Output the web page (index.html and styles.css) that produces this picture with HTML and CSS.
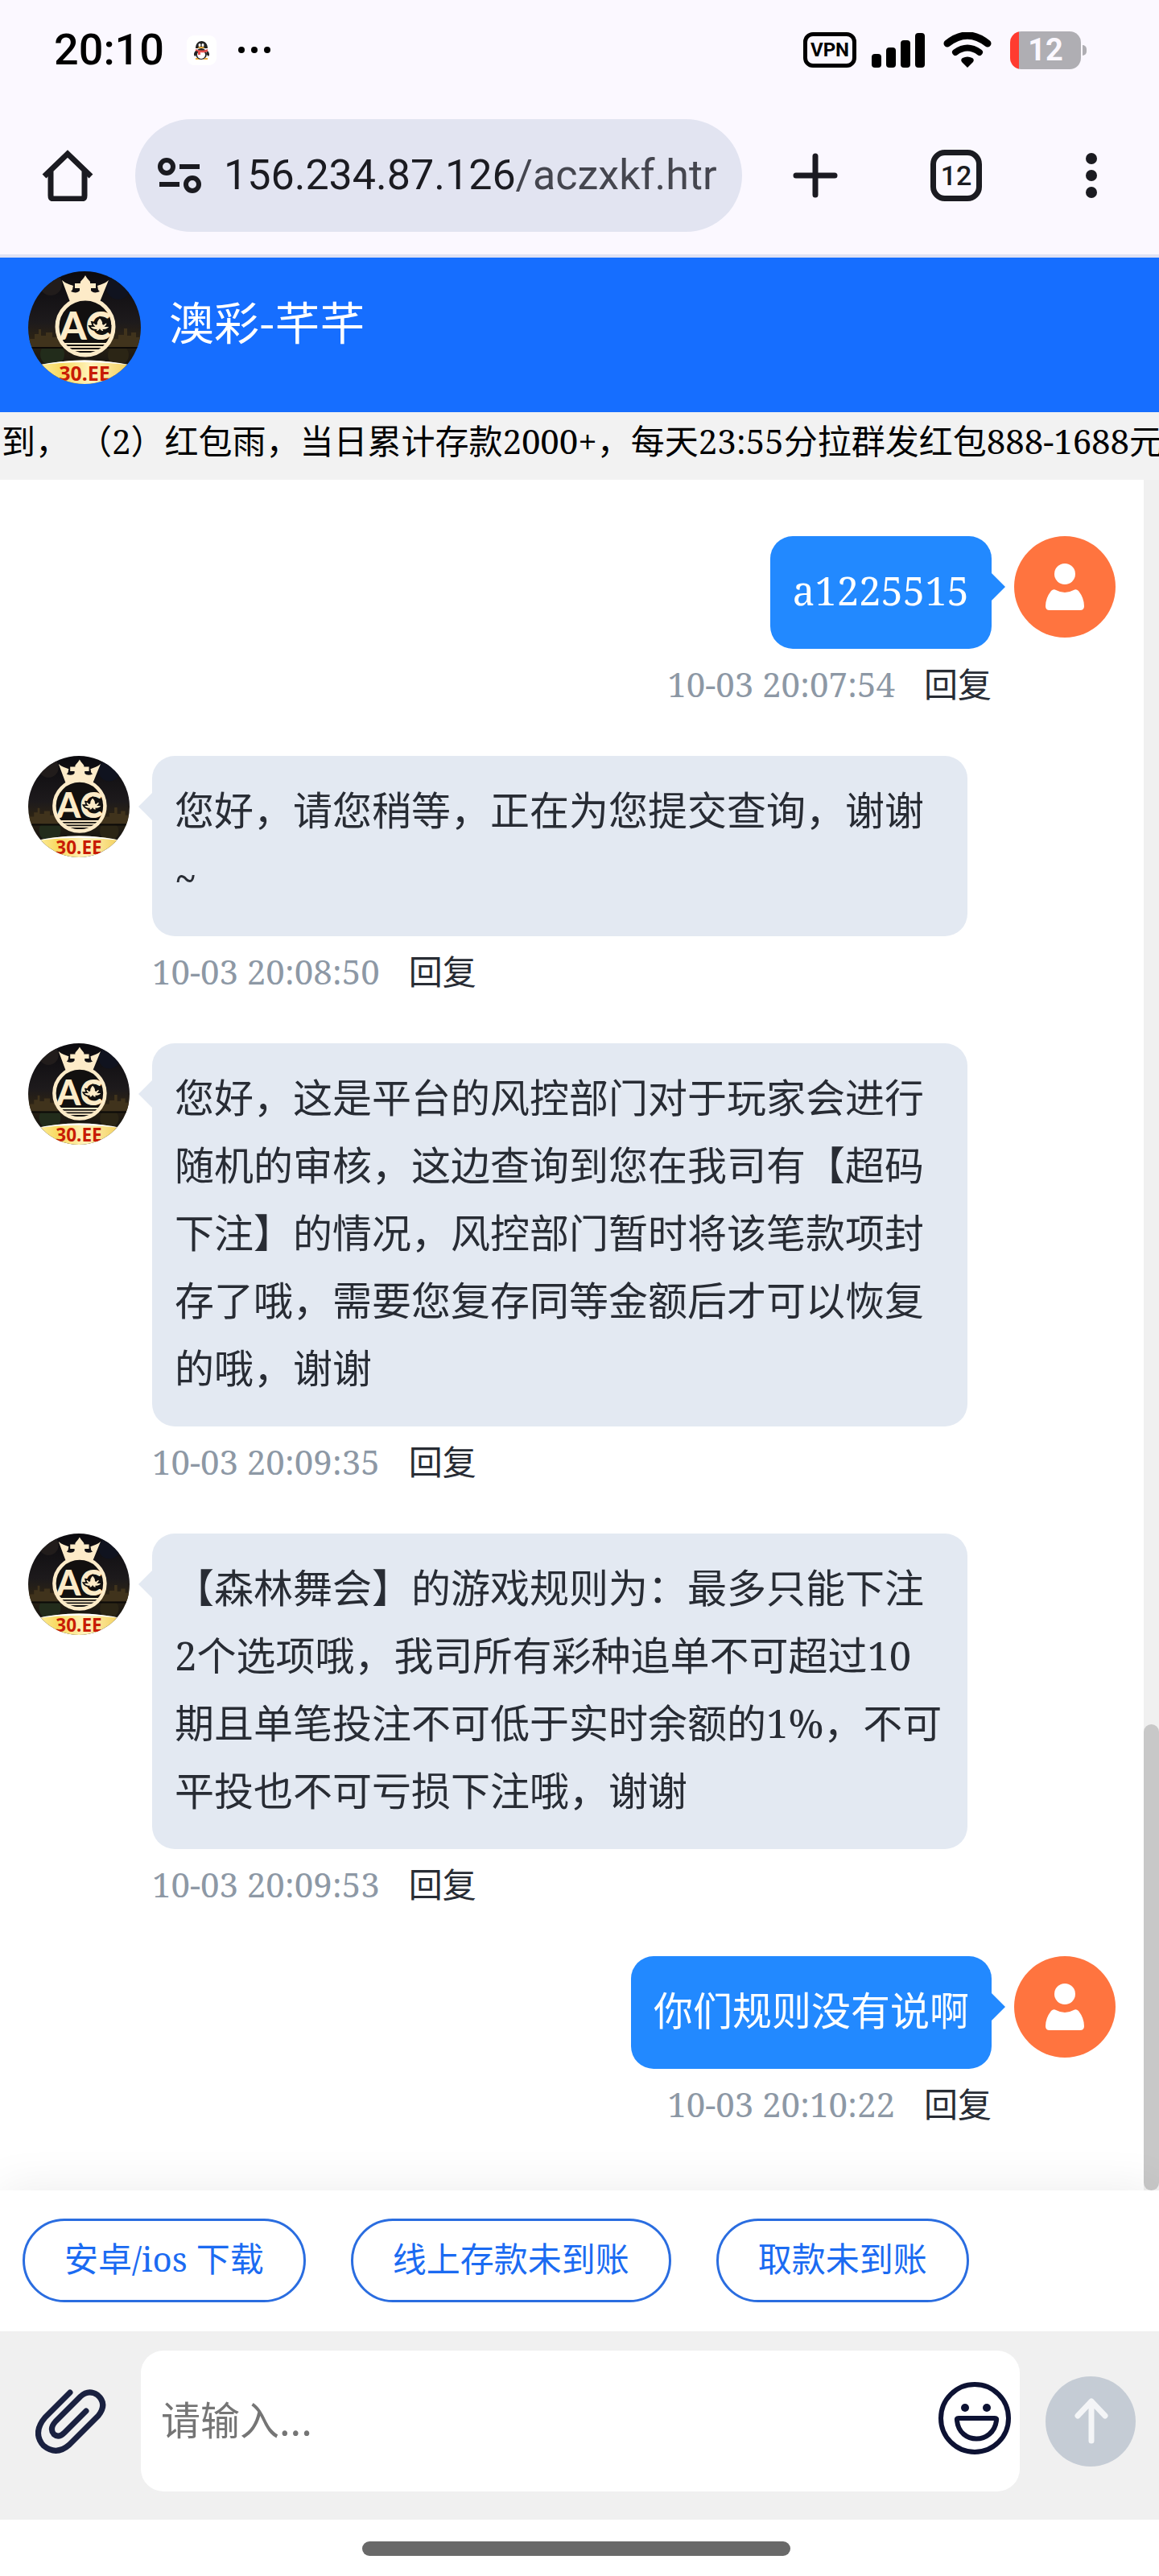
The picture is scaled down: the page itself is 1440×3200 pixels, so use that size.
FILE: index.html
```html
<!DOCTYPE html>
<html lang="zh-CN">
<head>
    <meta charset="UTF-8">
    <meta name="viewport" content="width=device-width, initial-scale=1">
    <title>澳彩-芊芊</title>
    <link rel="stylesheet" href="styles.css">
</head>
<body>
    <!-- Phone status bar -->
    <div class="status-bar">
        <span class="clock">20:10</span>
        <svg class="qq" width="37" height="37" viewBox="0 0 37 37">
            <rect width="37" height="37" rx="9" fill="#fff"/>
            <path d="M14 28h-3v2h6zM23 28h3v2h-6z" fill="#f2b13c"/>
            <path d="M12 18c-3 3-4 6-2 8l2-2zM25 18c3 3 4 6 2 8l-2-2z" fill="#222"/>
            <ellipse cx="18" cy="23" rx="7" ry="7" fill="#222"/>
            <ellipse cx="18" cy="24" rx="5" ry="5" fill="#fff"/>
            <path d="M11 16c0-12 15-12 15 0z" fill="#222"/>
            <ellipse cx="16" cy="12" rx="1.500" ry="2" fill="#fff"/>
            <ellipse cx="20" cy="12" rx="1.500" ry="2" fill="#fff"/>
            <ellipse cx="18" cy="15" rx="4" ry="1" fill="#f2b13c"/>
            <path d="M11 17q7 3 15 0v3q-5 2-9 1v3h-3v-4l-3-1z" fill="#e5514f"/>
        </svg>
        <svg class="more-apps" width="42" height="10" viewBox="0 0 42 10">
            <circle cx="5" cy="5" r="4"/><circle cx="21" cy="5" r="4"/><circle cx="37" cy="5" r="4"/>
        </svg>
        <div class="status-icons">
            <span class="vpn">VPN</span>
            <svg width="66" height="43" viewBox="0 0 66 43">
                <rect x="0" y="26" width="12" height="17" rx="4"/><rect x="18" y="18" width="12" height="25" rx="4"/>
                <rect x="36" y="9" width="12" height="34" rx="4"/><rect x="54" y="0" width="12" height="43" rx="4"/>
            </svg>
            <svg class="wifi" width="60" height="44" viewBox="0 0 60 44">
                <path d="M5 14q25-20 50 0" fill="none" stroke="#000" stroke-width="9" stroke-linecap="round"/>
                <path d="M15 25q15-11 30 0" fill="none" stroke="#000" stroke-width="8" stroke-linecap="round"/>
                <path d="M30 44l-7-7q-2-3 1-5 6-3 12 0 3 2 1 5z"/>
            </svg>
            <div class="battery"><span class="battery-level">12</span></div>
        </div>
    </div>

    <!-- Browser toolbar -->
    <div class="toolbar">
        <button class="home" aria-label="主页">
            <svg width="64" height="64" viewBox="0 0 64 64" fill="none" stroke="#1b1b21" stroke-width="7" stroke-linejoin="round">
                <path d="M11 27v30q0 4 4 4h34q4 0 4-4V27"/>
                <path d="M3 33L32 5l29 28" stroke-linejoin="miter"/>
            </svg>
        </button>
        <div class="address">
            <svg width="54" height="44" viewBox="0 0 54 44" fill="none" stroke="#1b1b21" stroke-width="6">
                <circle cx="11" cy="11" r="8"/><path d="M27 11h25M2 33h25"/><circle cx="43" cy="33" r="8"/>
            </svg>
            <span class="url">156.234.87.126<span class="path">/aczxkf.htr</span></span>
        </div>
        <button class="tool new-tab" aria-label="新标签页">
            <svg width="56" height="56" viewBox="0 0 56 56" stroke="#1b1b21" stroke-width="7" stroke-linecap="round"><path d="M28 4v48M4 28h48"/></svg>
        </button>
        <button class="tool"><span class="tab-count">12</span></button>
        <button class="tool" aria-label="更多">
            <svg width="14" height="56" viewBox="0 0 14 56" fill="#1b1b21"><circle cx="7" cy="7" r="7"/><circle cx="7" cy="28" r="7"/><circle cx="7" cy="49" r="7"/></svg>
        </button>
    </div>

    <!-- Chat header, its logo is reused by the avatars -->
    <header class="chat-header">
        <svg class="header-logo" viewBox="0 0 140 140">
            <defs>
                <clipPath id="logoClip"><circle cx="70" cy="70" r="70"/></clipPath>
                <linearGradient id="night" x1="0" y1="0" x2="0" y2="1">
                    <stop offset="0" stop-color="#0b0a0e"/>
                    <stop offset="0.45" stop-color="#1d1a1c"/>
                    <stop offset="0.6" stop-color="#2c2314"/>
                    <stop offset="0.8" stop-color="#1a1712"/>
                </linearGradient>
                <linearGradient id="gold" x1="0" y1="0" x2="1" y2="0">
                    <stop offset="0" stop-color="#fff6b8"/>
                    <stop offset="0.3" stop-color="#f8d95f"/>
                    <stop offset="0.55" stop-color="#fff3bd"/>
                    <stop offset="1" stop-color="#f0c640"/>
                </linearGradient>
            </defs>
            <g id="logo" clip-path="url(#logoClip)">
                <rect width="140" height="140" fill="url(#night)"/>
                <circle cx="28" cy="16" r="14" fill="#211c1b"/>
                <circle cx="112" cy="20" r="15" fill="#10131f"/>
                <circle cx="30" cy="103" r="15" fill="#222c1b"/>
                <circle cx="112" cy="104" r="13" fill="#2b2515"/>
                <path d="M0 94V84h8v-6h5v-6h3v8h6v-4h8v6h6v-5h6v17zM140 94V82h-6v-6h-6v4h-5v-9h-4v8h-7v5h-8v-3h-6v13z" fill="#40331c"/>
                <path d="M0 95h140" stroke="#0c0a08" stroke-width="2"/>
                <circle cx="71" cy="69" r="35" fill="#12100f" stroke="#fdebc8" stroke-width="5"/>
                <path d="M42 11c4 4 9 5 14 7-1 3 0 5-3 7 4 2 9 2 11-1v-3h-6v-6h7c-1-3 3-4 6-10 3 6 7 7 6 10h7v6h-6v3c2 3 7 3 11 1-3-2-2-4-3-7 5-2 10-3 14-7L89 38c-12-6-25-6-37 0z" fill="#fdebc8"/>
                <text class="logo-letters" x="71" y="85" text-anchor="middle">AC</text>
                <path d="M89 57c4 4 5 6 4 9 3-3 5-3 6-3-1 3-1 4-2 5h5c-2 4-5 5-8 5 1 2-3 3-5 0-2 3-6 2-5 0-3 0-6-1-8-5h5c-1-1-1-2-2-5 1 0 3 0 6 3-1-3 0-5 4-9z" fill="#fdebc8" stroke="#12100f" stroke-width="2"/>
                <path d="M42 90h58M46 94h50M51 98h40M58 102h27" stroke="#fdebc8" stroke-width="2"/>
                <path d="M0 120Q70 101 140 120V140H0z" fill="url(#gold)"/>
                <path d="M10 117Q70 104 130 117Q70 109 10 117z" fill="#fff"/>
                <text class="logo-site" x="70" y="136" text-anchor="middle">30.EE</text>
            </g>
        </svg>
        <h1>澳彩-芊芊</h1>
    </header>
    <div class="notice">到， （2）红包雨，当日累计存款2000+，每天23:55分拉群发红包888-1688元</div>

    <!-- Messages -->
    <main class="chat">
        <div class="messages">
            <div class="message mine">
                <svg class="avatar" viewBox="0 0 126 126">
                    <g id="user">
                        <circle cx="63" cy="63" r="63" fill="#ff743f"/>
                        <circle cx="63" cy="47" r="13" fill="#fff"/>
                        <path d="M46 68q3-3 6-1 11 6 22 0 3-2 6 1 7 9 7 19 0 5-5 5H44q-5 0-5-5 0-10 7-19z" fill="#fff"/>
                    </g>
                </svg>
                <div class="content">
                    <div class="bubble">a1225515</div>
                    <div class="meta"><time>10-03 20:07:54</time><a href="#">回复</a></div>
                </div>
            </div>
            <div class="message">
                <svg class="avatar" viewBox="0 0 140 140"><use href="#logo"/></svg>
                <div class="content">
                    <div class="bubble">您好，请您稍等，正在为您提交查询，谢谢~</div>
                    <div class="meta"><time>10-03 20:08:50</time><a href="#">回复</a></div>
                </div>
            </div>
            <div class="message">
                <svg class="avatar" viewBox="0 0 140 140"><use href="#logo"/></svg>
                <div class="content">
                    <div class="bubble">您好，这是平台的风控部门对于玩家会进行随机的审核，这边查询到您在我司有【超码下注】的情况，风控部门暂时将该笔款项封存了哦，需要您复存同等金额后才可以恢复的哦，谢谢</div>
                    <div class="meta"><time>10-03 20:09:35</time><a href="#">回复</a></div>
                </div>
            </div>
            <div class="message">
                <svg class="avatar" viewBox="0 0 140 140"><use href="#logo"/></svg>
                <div class="content">
                    <div class="bubble">【森林舞会】的游戏规则为：最多只能下注2个选项哦，我司所有彩种追单不可超过10期且单笔投注不可低于实时余额的1%，不可平投也不可亏损下注哦，谢谢</div>
                    <div class="meta"><time>10-03 20:09:53</time><a href="#">回复</a></div>
                </div>
            </div>
            <div class="message mine">
                <svg class="avatar" viewBox="0 0 126 126"><use href="#user"/></svg>
                <div class="content">
                    <div class="bubble">你们规则没有说啊</div>
                    <div class="meta"><time>10-03 20:10:22</time><a href="#">回复</a></div>
                </div>
            </div>
        </div>
        <div class="scrollbar"><div class="thumb"></div></div>
    </main>

    <!-- Quick questions -->
    <div class="quick">
        <button>安卓/ios 下载</button>
        <button>线上存款未到账</button>
        <button>取款未到账</button>
    </div>

    <!-- Input row -->
    <form class="composer">
        <button type="button" class="attach" aria-label="附件">
            <svg width="88" height="80" viewBox="0 0 88 80" fill="none" stroke="#1a2140" stroke-width="7" stroke-linecap="round" stroke-linejoin="round">
                <path d="M43 4L12 35Q-4 54 10 70Q26 83 42 69L78 33Q90 18 77 7Q66 0 56 9L25 40Q17 49 23 56Q29 61 36 54L63 27"/>
            </svg>
        </button>
        <div class="field">
            <input type="text" placeholder="请输入..." aria-label="请输入">
            <button type="button" class="emoji" aria-label="表情">
                <svg width="90" height="90" viewBox="0 0 90 90" fill="none" stroke="#0d1233" stroke-width="6">
                    <circle cx="45" cy="45" r="42"/>
                    <circle cx="33" cy="32" r="5" fill="#0d1233" stroke="none"/><circle cx="60" cy="32" r="5" fill="#0d1233" stroke="none"/>
                    <path d="M25 45h45q3 0 2 3c-4 30-46 30-49 0q-1-3 2-3z"/>
                </svg>
            </button>
        </div>
        <button type="submit" class="send" aria-label="发送">
            <svg width="112" height="112" viewBox="0 0 112 112" fill="none" stroke="#f4f5f7" stroke-width="7" stroke-linecap="round" stroke-linejoin="round">
                <path d="M57 80V31M40 49l17-18 17 18"/>
            </svg>
        </button>
    </form>
    <div class="nav-bar"><div class="handle"></div></div>
</body>
</html>
```

FILE: styles.css
```css
* { box-sizing: border-box; }
body { margin: 0; min-height: 100vh; display: flex; flex-direction: column; background: #fff; color: #282c34; font-family: "Noto Serif", "DejaVu Serif Condensed", "Noto Sans CJK SC", serif; font-size: 42px; }
button { border: 0; padding: 0; background: none; font: inherit; cursor: pointer; }
svg { display: block; flex: none; }
.logo-letters { font: 900 48px Lato, sans-serif; fill: #fdebc8; }
.logo-site { font: bold 25px "Noto Sans", sans-serif; fill: #c81b05; }

/* status bar */
.status-bar { display: flex; align-items: center; height: 124px; padding: 0 97px 0 67px; background: #fbf8ff; }
.clock { font: 500 54px/60px Roboto, sans-serif; color: #000; }
.qq { margin-left: 28px; }
.more-apps { margin-left: 26px; }
.status-icons { display: flex; align-items: center; gap: 19px; margin-left: auto; }
.vpn { width: 66px; height: 44px; border: 5px solid #000; border-radius: 12px; font: bold 24px/34px Roboto, sans-serif; color: #000; text-align: center; }
.wifi { margin-left: 4px; }
.battery { position: relative; display: flex; justify-content: center; align-items: center; width: 88px; height: 47px; margin-left: 4px; border-radius: 14px; background: linear-gradient(to right, #ff3b30 11px, #afaeb3 11px); }
.battery::after { content: ""; position: absolute; left: 90px; top: 17px; width: 5px; height: 13px; border-radius: 0 5px 5px 0; background: #afaeb3; }
.battery-level { font: bold 38px/46px Roboto, sans-serif; color: #fbf8ff; }

/* browser toolbar */
.toolbar { display: flex; align-items: center; padding: 24px 0 28px; background: #fbf8ff; border-bottom: 4px solid #dfe2f4; }
.home { padding: 0 52px; }
.address { flex: 1; min-width: 0; display: flex; align-items: center; gap: 28px; height: 140px; padding: 0 28px; border-radius: 70px; background: #e2e4f1; }
.url { overflow: hidden; white-space: nowrap; font: 52px/70px Roboto, sans-serif; color: #1b1b21; }
.path { color: #45464f; }
.tool { display: flex; justify-content: center; align-items: center; width: 168px; height: 140px; }
.new-tab { width: 182px; }
.tab-count { width: 64px; height: 64px; border: 7px solid #1b1b21; border-radius: 18px; font: 500 34px/50px Roboto, sans-serif; color: #1b1b21; }

/* chat header */
.chat-header { display: flex; gap: 35px; padding: 17px 35px 35px; background: #166eff; }
.header-logo { width: 140px; height: 140px; }
.chat-header h1 { margin: 0; font: 400 56px/122px "Noto Sans CJK SC", sans-serif; color: #fff; }
.notice { height: 84px; padding-left: 2px; overflow: hidden; white-space: nowrap; background: #f2f2f2; color: #000; line-height: 72px; }

/* messages */
.chat { flex: 1; display: flex; }
.messages { flex: 1; padding: 70px 35px 18px; }
.message { display: flex; gap: 28px; margin-bottom: 56px; }
.message.mine { flex-direction: row-reverse; }
.avatar { width: 126px; height: 126px; }
.content { display: flex; flex-direction: column; align-items: flex-start; max-width: 75%; }
.mine .content { align-items: flex-end; }
.bubble { position: relative; padding: 25px 28px 31px; border-radius: 28px; background: #e3e9f2; font-size: 49px; line-height: 84px; }
.bubble::before { content: ""; position: absolute; left: -17px; top: 45px; border: 18px solid transparent; border-left-width: 0; border-right-color: #e3e9f2; }
.mine .bubble { background: #2289ff; color: #fff; }
.mine .bubble::before { left: auto; right: -17px; border-width: 18px 0 18px 18px; border-color: transparent transparent transparent #2289ff; }
.meta { display: flex; gap: 36px; padding: 12px 0 2px; line-height: 63px; }
.meta time { color: #8d98a5; }
.meta a { color: inherit; text-decoration: none; }
.scrollbar { display: flex; flex-direction: column; justify-content: flex-end; width: 19px; background: #f0f0f0; }
.thumb { height: 579px; border-radius: 10px; background: #c8c8c8; }

/* quick questions */
.quick { display: flex; gap: 56px; padding: 35px 28px 36px; background: #fff; box-shadow: 0 0 56px rgba(0, 0, 0, 0.08); }
.quick button { height: 104px; padding: 0 49px 10px; border: 3px solid #2a6de0; border-radius: 52px; color: #1b6bf2; }

/* input row */
.composer { position: relative; display: flex; align-items: center; padding: 24px 29px 35px 44px; background: #f0f0f0; }
.field { flex: 1; min-width: 0; display: flex; align-items: center; height: 175px; margin: 0 32px 0 43px; padding: 0 11px 8px 25px; border-radius: 28px; background: #fff; }
.field input { flex: 1; min-width: 0; border: 0; padding: 0; outline: none; background: none; font: 49px/84px "Noto Sans CJK SC", sans-serif; }
.field input::placeholder { color: #757575; }
.send { width: 112px; height: 112px; border-radius: 50%; background: #c5ccd5; }
.nav-bar { display: flex; justify-content: center; height: 70px; padding: 27px 8px 0 0; background: #fff; }
.handle { width: 532px; max-width: 50%; height: 18px; border-radius: 9px; background: #696969; }
```
